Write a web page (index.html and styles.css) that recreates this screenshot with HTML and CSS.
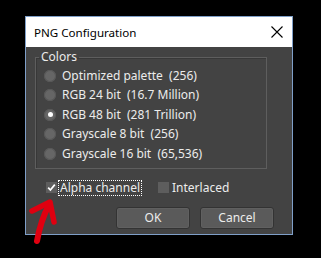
FILE: index.html
```html
<!DOCTYPE html>
<html>
<head>
<meta charset="utf-8">
<link rel="stylesheet" href="styles.css">
</head>
<body>
<div class="stage">
  <div class="window">
    <div class="titlebar">
      <span class="title">PNG Configuration</span>
      <svg class="close" width="12" height="12" viewBox="0 0 12 12"><path d="M0.5 0.5 L11.5 11.5 M11.5 0.5 L0.5 11.5" stroke="#000" stroke-width="1.1" fill="none"/></svg>
    </div>
    <div class="content">
      <fieldset class="group">
        <legend class="legend">Colors</legend>
        <div class="radio-row"><span class="radio"></span><span class="label">Optimized palette&nbsp; (256)</span></div>
        <div class="radio-row"><span class="radio"></span><span class="label">RGB 24 bit&nbsp; (16.7 Million)</span></div>
        <div class="radio-row"><span class="radio checked"></span><span class="label">RGB 48 bit&nbsp; (281 Trillion)</span></div>
        <div class="radio-row"><span class="radio"></span><span class="label">Grayscale 8 bit&nbsp; (256)</span></div>
        <div class="radio-row"><span class="radio"></span><span class="label">Grayscale 16 bit&nbsp; (65,536)</span></div>
      </fieldset>
      <div class="checks">
        <div class="check-item alpha">
          <span class="checkbox"><svg width="11" height="11" viewBox="0 0 11 11"><path d="M2.2 5.6 L4.4 8 L8.8 2.6" stroke="#fff" stroke-width="1.7" fill="none"/></svg></span>
          <span class="label focus">Alpha channel</span>
        </div>
        <div class="check-item interlaced">
          <span class="checkbox"></span>
          <span class="label">Interlaced</span>
        </div>
      </div>
      <div class="buttons">
        <button class="btn">OK</button>
        <button class="btn">Cancel</button>
      </div>
    </div>
  </div>
  <svg class="arrow" width="321" height="258" viewBox="0 0 321 258">
    <path d="M37 241 C39 230 43 216 49 205" stroke="#e00010" stroke-width="6" fill="none" stroke-linecap="round"/>
    <path d="M32 211 L50 202 L54 222" stroke="#e00010" stroke-width="5.5" fill="none" stroke-linecap="round" stroke-linejoin="round"/>
  </svg>
</div>
</body>
</html>
```
FILE: styles.css
```css
html, body {
  margin: 0;
  padding: 0;
  background: #000;
}
.stage {
  position: relative;
  width: 321px;
  height: 258px;
  padding: 16px 0 0 25px;
  box-sizing: border-box;
  font-family: "Segoe UI", "Noto Sans", "Open Sans", sans-serif;
  font-size: 12px;
}
.window {
  width: 268px;
  height: 219px;
  border: 1px solid #7f9fc8;
  box-sizing: border-box;
  background: #434343;
  display: flex;
  flex-direction: column;
}
.titlebar {
  height: 30px;
  background: #fff;
  display: flex;
  align-items: center;
  justify-content: space-between;
  padding: 0 9px 0 8px;
  flex: none;
}
.title {
  color: #000;
  font-size: 11.6px;
  padding-top: 1px;
}
.close {
  display: block;
}
.content {
  flex: 1;
  padding: 3px 0 0 9px;
  display: flex;
  flex-direction: column;
}
.group {
  width: 232px;
  box-sizing: border-box;
  margin: 0;
  padding: 2px 0 4px 8px;
  border: 1px solid #5e5e5e;
  box-shadow: inset 1px 1px 0 #383838;
  min-width: 0;
}
.legend {
  color: #ececec;
  padding: 0 2px;
  margin-left: -5px;
  line-height: 14px;
}
.radio-row {
  height: 19.5px;
  display: flex;
  align-items: center;
  gap: 6px;
}
.radio {
  width: 12px;
  height: 12px;
  border-radius: 50%;
  background: #666;
  box-shadow: inset 0 0 0 1px #575757;
  flex: none;
  display: flex;
  align-items: center;
  justify-content: center;
}
.radio.checked::after {
  content: "";
  width: 5px;
  height: 5px;
  border-radius: 50%;
  background: #fff;
}
.label {
  color: #ececec;
  white-space: nowrap;
  line-height: 14px;
}
.checks {
  display: flex;
  margin-top: 11px;
  height: 16px;
  align-items: center;
  padding-left: 11px;
}
.check-item {
  display: flex;
  align-items: center;
}
.interlaced {
  margin-left: 17px;
  gap: 3px;
}
.alpha {
  gap: 2px;
}
.checkbox {
  width: 11px;
  height: 11px;
  background: #5d5d5d;
  display: block;
  flex: none;
}
.checkbox svg {
  display: block;
}
.focus {
  outline: 1px dotted #fff;
  padding: 0 1px;
  line-height: 14px;
}
.buttons {
  display: flex;
  justify-content: flex-end;
  gap: 10px;
  margin-top: 11px;
  padding-right: 18px;
}
.btn {
  width: 74px;
  height: 22px;
  background: #5a5a5a;
  border: 1px solid #333;
  border-radius: 3px;
  color: #ececec;
  font-family: inherit;
  font-size: 12px;
  padding: 0;
  box-shadow: inset 0 0 0 1px #606060;
}
.arrow {
  position: absolute;
  left: 0;
  top: 0;
  pointer-events: none;
}
```
